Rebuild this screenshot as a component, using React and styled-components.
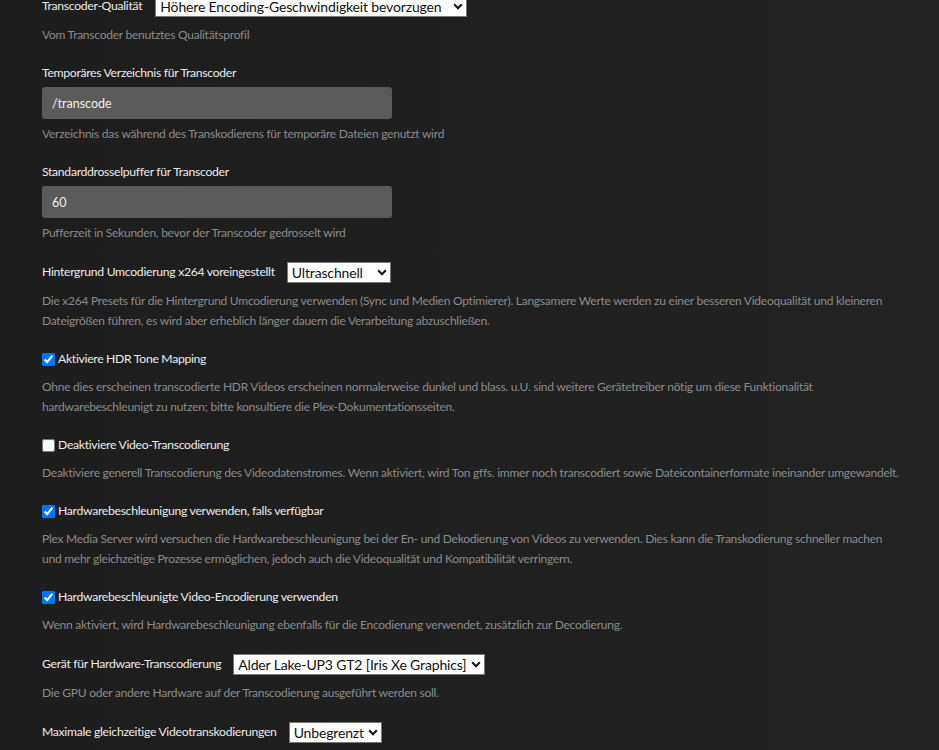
import React from "react";
import styled, { createGlobalStyle } from "styled-components";

const Global = createGlobalStyle`
  html, body { margin: 0; padding: 0; background: #1f1f1f; }
  body {
    font-family: "Lato", "Noto Sans", "DejaVu Sans", sans-serif;
    -webkit-font-smoothing: antialiased;
  }
`;

const Page = styled.div`
  min-height: 760px;
  background: linear-gradient(90deg, #1d1d1d 0%, #202020 60%, #222222 100%);
  padding: 0 40px 0 42px;
  margin-top: -5px;
  box-sizing: border-box;
`;

const Group = styled.div`
  margin-bottom: 18px;
`;

const Row = styled.div`
  display: flex;
  align-items: center;
  min-height: 22px;
  gap: ${(p) => p.$gap || 10}px;
`;

const Label = styled.label`
  font-size: 12.2px;
  letter-spacing: -0.3px;
  line-height: 20px;
  color: #ececec;
  display: flex;
  align-items: center;
`;

const Check = styled.input.attrs({ type: "checkbox" })`
  width: 13px;
  height: 13px;
  margin: 0 3px 0 0;
  accent-color: #0075ff;
`;

const Desc = styled.p`
  margin: 8px 0 0;
  font-size: 12px;
  letter-spacing: -0.25px;
  line-height: 20px;
  color: #8c8c8c;
`;

const Input = styled.div`
  width: 350px;
  height: 32px;
  margin-top: 4px;
  margin-bottom: -3px;
  background: #5a5a5a;
  border-radius: 3px;
  color: #f0f0f0;
  font-size: 12.5px;
  display: flex;
  align-items: center;
  padding-left: 10px;
  box-sizing: border-box;
`;

const Select = styled.div`
  height: 21px;
  box-sizing: border-box;
  background: #ffffff;
  border: 1px solid #767676;
  color: #111;
  font-size: 14px;
  letter-spacing: -0.15px;
  display: flex;
  align-items: center;
  padding: 0 3px 0 4px;
  gap: 3px;
  width: ${(p) => (p.$w ? p.$w + "px" : "auto")};
  justify-content: space-between;
  white-space: nowrap;
  overflow: hidden;
`;

const SelectText = styled.span`
  overflow: hidden;
  flex: 1 1 auto;
`;

const ChevronSvg = styled.svg`
  flex: 0 0 auto;
`;

const Chevron = () => (
  <ChevronSvg width="10" height="7" viewBox="0 0 10 7">
    <path d="M1.2 1.3 L5 5.2 L8.8 1.3" fill="none" stroke="#111" strokeWidth="2" />
  </ChevronSvg>
);

const Dropdown = ({ value, w }) => (
  <Select $w={w}>
    <SelectText>{value}</SelectText>
    <Chevron />
  </Select>
);

export default function App() {
  return (
    <>
      <Global />
      <Page>
        <Group>
          <Row $gap={13}>
            <Label>Transcoder-Qualität</Label>
            <Dropdown value="Höhere Encoding-Geschwindigkeit bevorzugen" w={312} />
          </Row>
          <Desc>Vom Transcoder benutztes Qualitätsprofil</Desc>
        </Group>

        <Group>
          <Label>Temporäres Verzeichnis für Transcoder</Label>
          <Input>/transcode</Input>
          <Desc>Verzeichnis das während des Transkodierens für temporäre Dateien genutzt wird</Desc>
        </Group>

        <Group>
          <Label>Standarddrosselpuffer für Transcoder</Label>
          <Input>60</Input>
          <Desc>Pufferzeit in Sekunden, bevor der Transcoder gedrosselt wird</Desc>
        </Group>

        <Group>
          <Row $gap={12}>
            <Label>Hintergrund Umcodierung x264 voreingestellt</Label>
            <Dropdown value="Ultraschnell" w={104} />
          </Row>
          <Desc>
            Die x264 Presets für die Hintergrund Umcodierung verwenden (Sync und Medien Optimierer). Langsamere Werte werden zu einer besseren Videoqualität und kleineren
            <br />
            Dateigrößen führen, es wird aber erheblich länger dauern die Verarbeitung abzuschließen.
          </Desc>
        </Group>

        <Group>
          <Label>
            <Check defaultChecked />
            Aktiviere HDR Tone Mapping
          </Label>
          <Desc>
            Ohne dies erscheinen transcodierte HDR Videos erscheinen normalerweise dunkel und blass. u.U. sind weitere Gerätetreiber nötig um diese Funktionalität
            <br />
            hardwarebeschleunigt zu nutzen; bitte konsultiere die Plex-Dokumentationsseiten.
          </Desc>
        </Group>

        <Group>
          <Label>
            <Check />
            Deaktiviere Video-Transcodierung
          </Label>
          <Desc>
            Deaktiviere generell Transcodierung des Videodatenstromes. Wenn aktiviert, wird Ton gffs. immer noch transcodiert sowie Dateicontainerformate ineinander umgewandelt.
          </Desc>
        </Group>

        <Group>
          <Label>
            <Check defaultChecked />
            Hardwarebeschleunigung verwenden, falls verfügbar
          </Label>
          <Desc>
            Plex Media Server wird versuchen die Hardwarebeschleunigung bei der En- und Dekodierung von Videos zu verwenden. Dies kann die Transkodierung schneller machen
            <br />
            und mehr gleichzeitige Prozesse ermöglichen, jedoch auch die Videoqualität und Kompatibilität verringern.
          </Desc>
        </Group>

        <Group>
          <Label>
            <Check defaultChecked />
            Hardwarebeschleunigte Video-Encodierung verwenden
          </Label>
          <Desc>Wenn aktiviert, wird Hardwarebeschleunigung ebenfalls für die Encodierung verwendet, zusätzlich zur Decodierung.</Desc>
        </Group>

        <Group>
          <Row $gap={12}>
            <Label>Gerät für Hardware-Transcodierung</Label>
            <Dropdown value="Alder Lake-UP3 GT2 [Iris Xe Graphics]" w={252} />
          </Row>
          <Desc>Die GPU oder andere Hardware auf der Transcodierung ausgeführt werden soll.</Desc>
        </Group>

        <Group>
          <Row $gap={12}>
            <Label>Maximale gleichzeitige Videotranskodierungen</Label>
            <Dropdown value="Unbegrenzt" w={93} />
          </Row>
        </Group>
      </Page>
    </>
  );
}
